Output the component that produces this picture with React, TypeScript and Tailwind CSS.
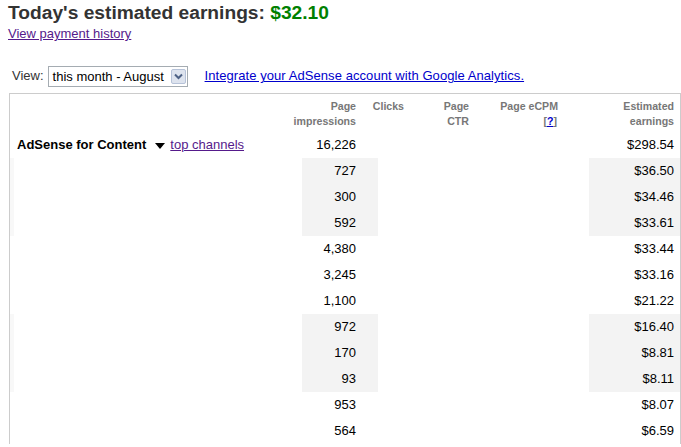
import React from "react";

const rows: { imp: string; earn: string; shaded: boolean }[] = [
  { imp: "727", earn: "$36.50", shaded: true },
  { imp: "300", earn: "$34.46", shaded: true },
  { imp: "592", earn: "$33.61", shaded: true },
  { imp: "4,380", earn: "$33.44", shaded: false },
  { imp: "3,245", earn: "$33.16", shaded: false },
  { imp: "1,100", earn: "$21.22", shaded: false },
  { imp: "972", earn: "$16.40", shaded: true },
  { imp: "170", earn: "$8.81", shaded: true },
  { imp: "93", earn: "$8.11", shaded: true },
  { imp: "953", earn: "$8.07", shaded: false },
  { imp: "564", earn: "$6.59", shaded: false },
];

export default function App() {
  return (
    <div
      className="w-[681px] h-[447px] overflow-hidden bg-white text-[13px] text-black"
      style={{ fontFamily: '"Liberation Sans", Arial, sans-serif' }}
    >
      <div className="pl-[8px] pt-[1px]">
        <div className="text-[19.2px] font-bold leading-[23px] text-[#333333]">
          Today's estimated earnings: <span className="text-[#008000]">$32.10</span>
        </div>
        <a className="block mt-[2px] leading-[15px] text-[#551a8b] underline w-max">View payment history</a>
      </div>

      <div className="flex items-center h-[22px] mt-[24px] pl-[12px]">
        <span className="text-[#333333]">View:</span>
        <div className="ml-[4px] flex items-center h-[21px] w-[140px] border border-[#a5acb2] bg-white pl-[4px] pr-[1px]">
          <span className="flex-1 whitespace-nowrap leading-[15px]">this month - August</span>
          <span className="flex items-center justify-center w-[15px] h-[15px] bg-[#dde3ee] border border-[#b6c2d8] rounded-[2px]">
            <svg width="9" height="7" viewBox="0 0 9 7">
              <path d="M1 1.5 L4.5 5 L8 1.5" stroke="#4d6185" strokeWidth="2" fill="none" />
            </svg>
          </span>
        </div>
        <a className="ml-[17px] text-[#0000cc] underline whitespace-nowrap tracking-[0.07px]">
          Integrate your AdSense account with Google Analytics.
        </a>
      </div>

      <div className="ml-[9px] mt-[6px] w-[672px] border-l border-t border-r border-[#cccccc]">
        {/* header */}
        <div className="flex h-[38px] pt-[5px] text-[10.6px] font-bold leading-[15px] text-[#777777]">
          <div className="w-[280px]" />
          <div className="w-[66px] text-right">
            Page
            <br />
            impressions
          </div>
          <div className="w-[48px] text-right">Clicks</div>
          <div className="w-[65px] text-right">
            Page
            <br />
            CTR
          </div>
          <div className="w-[89px] text-right">
            Page eCPM
            <br />
            <span className="pr-[1px]">
              [<a className="text-[#0000cc] underline">?</a>]
            </span>
          </div>
          <div className="w-[116px] text-right">
            Estimated
            <br />
            earnings
          </div>
        </div>

        {/* AdSense row */}
        <div className="flex h-[26px] items-center">
          <div className="w-[292px] flex items-center pl-[7px]">
            <span className="font-bold">AdSense for Content</span>
            <svg width="10" height="6" viewBox="0 0 10 6" className="ml-[9px] mt-[1px]">
              <path d="M0 0 L10 0 L5 6 Z" fill="#000" />
            </svg>
            <a className="ml-[5px] text-[#551a8b] underline">top channels</a>
          </div>
          <div className="w-[76px] pr-[22px] text-right">16,226</div>
          <div className="w-[211px]" />
          <div className="w-[91px] pr-[6px] text-right">$298.54</div>
        </div>

        {rows.map((r, i) => (
          <div key={i} className="flex h-[26px] items-stretch">
            <div className="w-[292px] flex">
              <div className={r.shaded ? "w-[4px] bg-[#f8f8f8]" : "w-[4px]"} />
            </div>
            <div
              className={
                "w-[76px] pr-[22px] flex items-center justify-end " + (r.shaded ? "bg-[#f3f3f3]" : "")
              }
            >
              {r.imp}
            </div>
            <div className="w-[211px]" />
            <div
              className={
                "w-[91px] pr-[6px] flex items-center justify-end " + (r.shaded ? "bg-[#f3f3f3]" : "")
              }
            >
              {r.earn}
            </div>
          </div>
        ))}
      </div>
    </div>
  );
}
